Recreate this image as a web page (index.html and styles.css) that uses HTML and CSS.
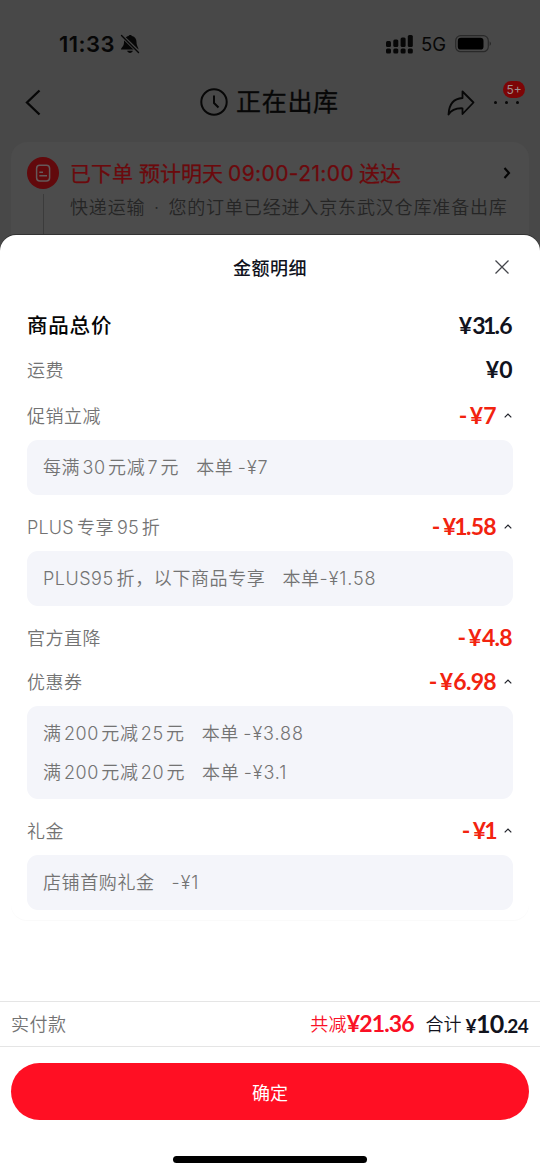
FILE: index.html
```html
<!DOCTYPE html>
<html lang="zh-CN">
<head>
<meta charset="utf-8">
<title>金额明细</title>
<link rel="stylesheet" href="styles.css">
</head>
<body>
<div class="screen">
  <div class="backdrop">
    <div class="status">
      <span class="time">11:33</span>
      <svg class="bell" width="20" height="20" viewBox="0 0 20 20"><path d="M1 15.5C1 13.5 4 12.5 4 8.500C4 4.500 6 2.500 8.500 2C9 .5 11.500 .5 12 2C15 2.800 16.500 5 16.500 8C16.500 12 18.500 13.500 18.500 15.500ZM7.200 16.800H12.800C12.300 19.600 7.700 19.600 7.200 16.800Z" fill="#070707"/><path d="M1.500 1.500L19 18.500" stroke="#484848" stroke-width="3.400"/><path d="M1.500 1.500L18.500 18.500" stroke="#070707" stroke-width="1.400" stroke-linecap="round"/></svg>
      <svg class="signal" width="27" height="19" viewBox="0 0 27 19" fill="#070707"><rect x="0" y="6" width="5" height="6" rx="1.500"/><rect x="7.300" y="4.500" width="5" height="7.500" rx="1.500"/><rect x="14.600" y="2.500" width="5" height="9.500" rx="1.500"/><rect x="21.800" y="0" width="5" height="12" rx="1.500"/><rect x="0" y="13.500" width="5" height="5" rx="1.500"/><rect x="7.300" y="13.500" width="5" height="5" rx="1.500"/><rect x="14.600" y="13.500" width="5" height="5" rx="1.500"/><rect x="21.800" y="13.500" width="5" height="5" rx="1.500"/></svg>
      <span class="net">5G</span>
      <svg class="battery" width="37" height="18" viewBox="0 0 37 18"><rect x=".7" y=".7" width="32.600" height="16" rx="5" fill="none" stroke="#292929" stroke-width="1.200"/><rect x="2.800" y="2.800" width="25.700" height="11.800" rx="3.200" fill="#000"/><path d="M34.700 6.300Q37 8.700 34.700 11Z" fill="#202020"/></svg>
    </div>
    <div class="nav">
      <svg class="back" width="16" height="27" viewBox="0 0 16 27"><path d="M14.500 1.500L2 13.500L14.500 25.500" fill="none" stroke="#070707" stroke-width="2.300"/></svg>
      <svg class="clock" width="28" height="28" viewBox="0 0 28 28"><g fill="none" stroke="#070707" stroke-width="2"><circle cx="14" cy="14" r="12.700"/><path d="M14 7.500V15L18.500 19.500"/></g></svg>
      <h1 class="nav-title">正在出库</h1>
      <svg class="share" width="28" height="26" viewBox="0 0 28 26"><path d="M15.500 1.500L26.500 12.500L15.500 24V18.300C8.500 18 4.500 19.500 1.500 24.500C2 14.500 7 8.500 15.500 8Z" fill="none" stroke="#070707" stroke-width="1.800" stroke-linejoin="round"/></svg>
      <div class="more"><i></i><i></i><i></i><span class="badge">5+</span></div>
    </div>
    <div class="order">
      <div class="rail">
        <svg width="32" height="32" viewBox="0 0 32 32"><circle cx="16" cy="16" r="16" fill="#62090c"/><g fill="none" stroke="#65595a" stroke-width="1.500"><rect x="9.600" y="8.200" width="13" height="15.700" rx="3.200"/><path d="M12.300 15.200H16M12.300 18.700H20"/></g></svg>
        <div class="line"></div>
      </div>
      <div class="order-text">
        <div class="order-title"><span>已下单</span><span class="eta">预计明天</span><span class="hours">09:00-21:00</span><span>送达</span></div>
        <div class="order-sub">快递运输<span class="dot">·</span>您的订单已经进入京东武汉仓库准备出库</div>
      </div>
      <svg class="go" width="8" height="12" viewBox="0 0 8 12"><path d="M1.500 1L6 6L1.500 11" fill="none" stroke="#050505" stroke-width="2.100"/></svg>
    </div>
  </div>

  <section class="sheet">
    <header class="sheet-head">
      <h2 class="sheet-title">金额明细</h2>
      <svg class="close" width="16" height="16" viewBox="0 0 16 16"><path d="M1.500 1.500L14.500 14.500M14.500 1.500L1.500 14.500" stroke="#44454b" stroke-width="1.250"/></svg>
    </header>
    <div class="list">
      <div class="row total"><span class="label">商品总价</span><span class="price"><span class="cny">¥</span>3<span class="one">1</span>.6</span></div>
      <div class="row shipping"><span class="label">运费</span><span class="price"><span class="cny">¥</span>0</span></div>
      <div class="row"><span class="label">促销立减</span><span class="price off"><span class="minus">-</span><span class="cny">¥</span>7</span><svg class="caret" width="8" height="5" viewBox="0 0 8 5"><path d="M.7 4.400L4 1.100L7.300 4.400"/></svg></div>
      <div class="box"><p class="rule"><span>每满</span><span class="num">30</span><span>元减</span><span class="num">7</span><span>元</span><span class="own">本单</span><span class="amt">-¥7</span></p></div>
      <div class="row after"><span class="label"><span class="latin">PLUS</span>专享<span class="latin mid">95</span>折</span><span class="price off"><span class="minus">-</span><span class="cny">¥</span><span class="one">1</span>.58</span><svg class="caret" width="8" height="5" viewBox="0 0 8 5"><path d="M.7 4.400L4 1.100L7.300 4.400"/></svg></div>
      <div class="box"><p class="rule"><span class="plus">PLUS95</span><span>折，以下商品专享</span><span class="own">本单</span><span class="amt tight">-¥1.58</span></p></div>
      <div class="row after direct"><span class="label">官方直降</span><span class="price off"><span class="minus">-</span><span class="cny">¥</span>4.8</span></div>
      <div class="row"><span class="label">优惠券</span><span class="price off"><span class="minus">-</span><span class="cny">¥</span>6.98</span><svg class="caret" width="8" height="5" viewBox="0 0 8 5"><path d="M.7 4.400L4 1.100L7.300 4.400"/></svg></div>
      <div class="box double"><p class="rule"><span>满</span><span class="num">200</span><span>元减</span><span class="num">25</span><span>元</span><span class="own">本单</span><span class="amt">-¥3.88</span></p><p class="rule"><span>满</span><span class="num">200</span><span>元减</span><span class="num">20</span><span>元</span><span class="own">本单</span><span class="amt">-¥3.1</span></p></div>
      <div class="row after"><span class="label">礼金</span><span class="price off"><span class="minus">-</span><span class="cny">¥</span><span class="one">1</span></span><svg class="caret" width="8" height="5" viewBox="0 0 8 5"><path d="M.7 4.400L4 1.100L7.300 4.400"/></svg></div>
      <div class="box"><p class="rule"><span>店铺首购礼金</span><span class="amt gift">-¥1</span></p></div>
    </div>
    <footer class="footer">
      <div class="pay">
        <span class="label">实付款</span>
        <span class="saved">共减</span><span class="price saved-num">¥21.36</span>
        <span class="sum">合计</span><span class="price sum-num"><small class="yen">¥</small>10<small>.24</small></span>
      </div>
      <button class="confirm">确定</button>
      <div class="home"></div>
    </footer>
  </section>
</div>
</body>
</html>
```

FILE: styles.css
```css
* { box-sizing: border-box; }
body {
  margin: 0;
  font-family: Inter, "Noto Sans CJK SC", sans-serif;
  color: #11131d;
}
h1, h2, p { margin: 0; font-weight: 500; }
svg { display: block; flex: none; }
.screen {
  width: 540px;
  height: 1174px;
  display: flex;
  flex-direction: column;
  overflow: hidden;
  background: #484848;
}

/* Dimmed order page */
.backdrop { height: 235px; flex: none; background: #484848; color: #070707; }
.status { display: flex; align-items: center; height: 70px; padding: 18px 48px 0 59px; }
.time { width: 61px; font-size: 22px; font-weight: 600; letter-spacing: .5px; white-space: nowrap; }
.signal { margin-left: auto; }
.net { width: 34px; margin-left: 8px; font-size: 18.500px; font-weight: 400; }
.nav { display: flex; align-items: center; height: 65px; padding: 0 21px 0 25px; }
.clock { margin: -2px 0 0 159px; }
.nav-title { margin: -1px 0 0 8px; font-size: 25px; font-weight: 400; letter-spacing: .7px; line-height: 36px; white-space: nowrap; -webkit-text-stroke: .3px; }
.share { margin-left: auto; }
.more { position: relative; display: flex; justify-content: space-between; width: 25px; margin-left: 19px; }
.more i { width: 3px; height: 3px; border-radius: 50%; background: #070707; }
.badge {
  position: absolute;
  left: 9px;
  top: -20px;
  width: 22px;
  height: 17px;
  border-radius: 9px;
  background: #7d0506;
  color: #a0908f;
  font-size: 12px;
  line-height: 17px;
  text-align: center;
}
.order {
  display: flex;
  height: 93px;
  margin: 7px 11px 0;
  padding: 15px 18px 0 16px;
  border-radius: 16px 16px 0 0;
  background: #4c4c4c;
}
.rail { display: flex; flex-direction: column; align-items: center; width: 32px; gap: 5px; }
.line { width: 1px; flex: 1; background: #3b3b3b; }
.order-text { flex: 1; min-width: 0; padding: 1px 0 0 11px; white-space: nowrap; }
.order-title { display: flex; font-size: 21px; line-height: 32px; color: #6b090c; font-weight: 400; -webkit-text-stroke: .25px; }
.eta { margin-left: 6px; }
.hours { margin: 0 5px; letter-spacing: .4px; }
.order-sub { font-size: 18px; letter-spacing: .85px; line-height: 35px; color: #252525; font-weight: 350; }
.dot { display: inline-block; width: 23px; text-align: center; }
.go { margin-top: 10px; }

/* Amount sheet */
.sheet {
  flex: 1;
  display: flex;
  flex-direction: column;
  border-radius: 16px 16px 0 0;
  background: #fff;
  box-shadow: 0 -1px 0 #333;
}
.sheet-head { display: grid; grid-template-columns: 1fr auto 1fr; align-items: center; height: 64px; padding: 0 30px; }
.sheet-title { grid-column: 2; font-size: 18px; letter-spacing: .5px; }
.close { justify-self: end; }
.list { height: 621px; margin: 0 11px; padding: 0 16px; border-radius: 16px; box-shadow: 0 1px 1px #fafafa; }
.row { display: flex; align-items: center; height: 49px; }
.row .label, .row .price { padding-bottom: 2px; }
.label { margin-right: auto; font-size: 18px; letter-spacing: .5px; font-weight: 350; color: #737373; white-space: nowrap; }
.total { height: 52px; }
.total .label { font-size: 20.500px; font-weight: 500; color: #050505; letter-spacing: .8px; }
.total .price { margin-top: 2px; }
.shipping { height: 40px; padding-bottom: 3px; }
.after { margin-top: 7px; }
.direct { height: 44px; padding-top: 5px; }
.latin { margin-right: 3px; letter-spacing: .2px; }
.mid { margin-left: 3px; }
.price { font-family: Lato, "Noto Sans CJK SC", sans-serif; font-size: 23px; font-weight: 700; letter-spacing: -.7px; white-space: nowrap; }
.row .price { margin-right: 1px; }
.cny { margin-right: 1px; }
.minus { margin-right: 3px; }
.one { margin: 0 -1px 0 -2px; }
.off { color: #f2230f; }
.caret { margin: 0 1px 0 7px; fill: none; stroke: #20222a; stroke-width: 1.200; }
.box { padding: 8px 16px; border-radius: 11px; background: #f4f5fa; }
.rule { display: flex; height: 39px; line-height: 40px; font-size: 18px; letter-spacing: .6px; font-weight: 350; color: #737373; white-space: nowrap; }
.double { height: 93px; }
.num { margin: 0 2.300px; }
.own { margin-left: 17px; }
.amt { margin-left: 4.500px; letter-spacing: .9px; }
.plus { margin-right: 3px; letter-spacing: .5px; }
.tight { margin-left: 0; }
.gift { margin-left: 17px; }

.footer { margin-top: 81px; }
.pay { display: flex; align-items: center; height: 46px; padding: 0 12px 2px 11px; border: solid #e5e5e5; border-width: 1px 0; font-size: 18px; white-space: nowrap; }
.saved { color: #fa1025; letter-spacing: .3px; font-weight: 350; }
.saved-num { color: #fa1025; letter-spacing: -.9px; }
.sum { margin: 0 4px 0 12px; font-weight: 350; }
.sum-num { font-size: 25px; }
.sum-num small { font-size: 19px; }
.confirm {
  display: block;
  width: 518px;
  height: 57px;
  margin: 16px auto 0;
  padding: 0;
  border: 0;
  border-radius: 29px;
  background: #ff0f23;
  color: #fff;
  font: 400 18px "Noto Sans CJK SC", sans-serif;
}
.home { width: 194px; height: 7px; margin: 36px auto 0; border-radius: 4px; background: #000; }
```
